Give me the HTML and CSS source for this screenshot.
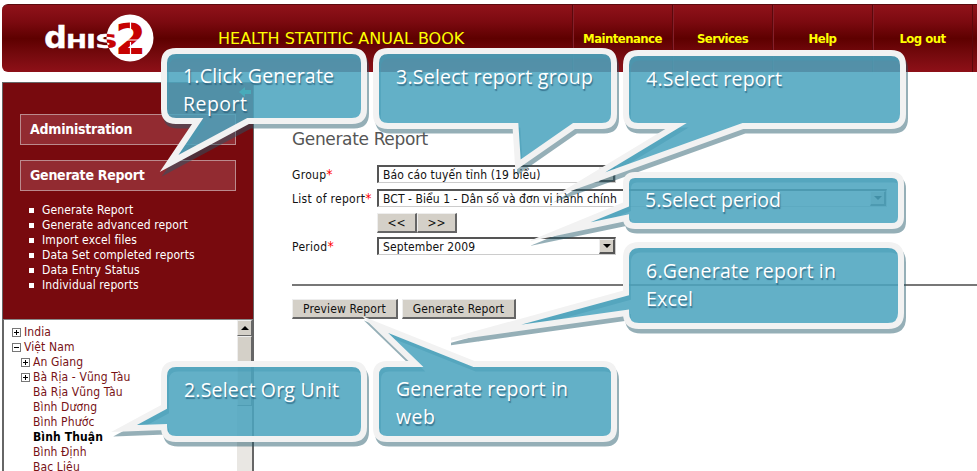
FILE: index.html
```html
<!DOCTYPE html>
<html lang="en">
<head>
<meta charset="utf-8">
<title>Generate Report</title>
<link rel="stylesheet" href="styles.css">
</head>
<body>
<header class="header">
  <svg class="logo" width="114" height="56" viewBox="0 0 114 56" role="img" aria-label="DHIS 2">
    <defs><clipPath id="disc"><circle cx="87" cy="28" r="23.5"/></clipPath></defs>
    <circle cx="87" cy="28" r="23.5" fill="#fff"/>
    <g class="logo-word" fill="#fff" stroke="#fff">
      <text x="1" y="38" font-size="30" textLength="23" lengthAdjust="spacingAndGlyphs">d</text>
      <text x="23" y="38" font-size="20" textLength="21" lengthAdjust="spacingAndGlyphs">H</text>
      <text x="43" y="38" font-size="20" textLength="10" lengthAdjust="spacingAndGlyphs">I</text>
      <text x="52" y="38" font-size="20" textLength="23" lengthAdjust="spacingAndGlyphs">S</text>
    </g>
    <g clip-path="url(#disc)" class="logo-word" fill="#c70202" stroke="#c70202">
      <text x="52" y="38" font-size="20" textLength="23" lengthAdjust="spacingAndGlyphs">S</text>
    </g>
    <text class="logo-two" x="72" y="44" font-size="43" textLength="31" lengthAdjust="spacingAndGlyphs">2</text>
    <path d="M74 30h28M87.500 12v10M87.500 32v14" stroke="#fff" stroke-width="1.200"/>
  </svg>
  <h1 class="title">HEALTH STATITIC ANUAL BOOK</h1>
  <nav class="nav"><a>Maintenance</a><a>Services</a><a>Help</a><a>Log out</a></nav>
</header>
<div class="page">
  <aside class="sidebar">
    <section class="menu">
      <svg class="collapse" width="16" height="14" viewBox="0 0 16 14"><path d="M2 7l6-5v3h6v4H8v3z" fill="#2fd59c"/></svg>
      <h2 class="menu-head">Administration</h2>
      <h2 class="menu-head">Generate Report</h2>
      <ul class="menu-list">
        <li>Generate Report</li><li>Generate advanced report</li><li>Import excel files</li><li>Data Set completed reports</li><li>Data Entry Status</li><li>Individual reports</li>
      </ul>
    </section>
    <section class="tree">
      <ul class="nodes">
        <li><i class="box plus"></i>India</li>
        <li><i class="box"></i>Việt Nam</li>
        <li class="sub"><i class="box plus"></i>An Giang</li>
        <li class="sub"><i class="box plus"></i>Bà Rịa - Vũng Tàu</li>
        <li class="leaf">Bà Rịa Vũng Tàu</li>
        <li class="leaf">Bình Dương</li>
        <li class="leaf">Bình Phước</li>
        <li class="leaf current">Bình Thuận</li>
        <li class="leaf">Bình Định</li>
        <li class="leaf">Bạc Liêu</li>
      </ul>
      <div class="scrollbar"><span class="up"></span><span class="thumb"></span></div>
    </section>
  </aside>
  <main class="main">
    <h2 class="heading">Generate Report</h2>
    <div class="form">
      <label>Group<b>*</b></label><div class="select"><span>Báo cáo tuyến tỉnh (19 biểu)</span><i></i></div>
      <label>List of report<b>*</b></label><div class="select wide"><span>BCT - Biểu 1 - Dân số và đơn vị hành chính</span><i></i></div>
      <span></span><div class="pager"><button>&lt;&lt;</button><button>&gt;&gt;</button></div>
      <label>Period<b>*</b></label><div class="select"><span>September 2009</span><i></i></div>
    </div>
    <div class="actions"><button>Preview Report</button><button>Generate Report</button></div>
  </main>
</div>
<svg class="callouts" width="977" height="471" viewBox="0 0 977 471">
  <defs>
    <path id="c1" d="M176 51H352Q364 51 364 63V109Q364 121 352 121H248L169 163.500 197.700 121H176Q164 121 164 109V63Q164 51 176 51Z"/>
    <path id="c2" d="M176 364H352Q364 364 364 376V427Q364 439 352 439H176Q164 439 164 427L124 428.500 164 407V376Q164 364 176 364Z"/>
    <path id="c3" d="M388 51H602Q614 51 614 63V114Q614 126 602 126H574L518 165 515.500 126H388Q376 126 376 114V63Q376 51 388 51Z"/>
    <path id="c4" d="M638 53H891Q903 53 903 65V114Q903 126 891 126H743L578.500 185 676 126H638Q626 126 626 114V65Q626 53 638 53Z"/>
    <path id="c5" d="M635 175H892Q901 175 901 184V217Q901 226 892 226H635Q626 226 626 218L559 232 626 204.500V184Q626 175 635 175Z"/>
    <path id="c6" d="M639 245H888Q901 245 901 258V313Q901 326 888 326H639Q626 326 626 313L476 334 626 293V258Q626 245 639 245Z"/>
    <path id="c7" d="M387 364H416L375 324.500 474 364H603Q614 364 614 375V428Q614 439 603 439H387Q376 439 376 428V375Q376 364 387 364Z"/>
    <clipPath id="k5"><rect x="531" y="160" width="400" height="90"/></clipPath>
    <clipPath id="k6"><rect x="451" y="230" width="480" height="120"/></clipPath>
  </defs>
  <g class="c"><use href="#c1" class="shade"/><use href="#c1" class="body"/></g>
  <g class="c"><use href="#c2" class="shade"/><use href="#c2" class="body"/></g>
  <g class="c"><use href="#c3" class="shade"/><use href="#c3" class="body"/></g>
  <g class="c"><use href="#c4" class="shade"/><use href="#c4" class="body"/></g>
  <g class="c" clip-path="url(#k5)"><use href="#c5" class="shade"/><use href="#c5" class="body"/></g>
  <g class="c" clip-path="url(#k6)"><use href="#c6" class="shade"/><use href="#c6" class="body"/></g>
  <g class="c"><use href="#c7" class="shade"/><use href="#c7" class="body"/></g>
  <g class="note">
    <text x="183" y="83" textLength="151">1.Click Generate</text><text x="183" y="111" textLength="64">Report</text>
    <text x="184" y="397" textLength="155">2.Select Org Unit</text>
    <text x="396" y="84" textLength="197">3.Select report group</text>
    <text x="646" y="86" textLength="136">4.Select report</text>
    <text x="645" y="207" textLength="136">5.Select period</text>
    <text x="646" y="278" textLength="190">6.Generate report in</text><text x="646" y="306" textLength="47">Excel</text>
    <text x="396" y="396" textLength="172">Generate report in</text><text x="396" y="424" textLength="39">web</text>
  </g>
</svg>
</body>
</html>
```
FILE: styles.css
```css
* { box-sizing: border-box; }
body { margin: 0; width: 977px; height: 471px; overflow: hidden; background: #fff; color: #111; font: 12px/15px "DejaVu Sans Condensed", "DejaVu Sans", sans-serif; font-stretch: condensed; letter-spacing: .12px; position: relative; }
h1, h2, ul { margin: 0; padding: 0; font-weight: normal; list-style: none; }
.header { margin: 4px 0 0 2px; height: 68px; border-radius: 6px 0 0 6px; background: linear-gradient(#90121a, #7c0a10 25%, #5e0000 50%, #760a0e 75%, #8e1018); border-top: 1px solid #5c0a0e; display: flex; }
.logo { margin: 5px 0 0 41px; }
.logo-word { font-family: "DejaVu Sans"; font-stretch: normal; font-weight: bold; stroke-width: .3; letter-spacing: 0; }
.logo-two { font-family: "DejaVu Sans"; font-stretch: normal; font-weight: bold; fill: #c70202; letter-spacing: 0; }
.title { margin-left: 61px; width: 354px; color: #ff0; font-family: "DejaVu Sans", sans-serif; font-stretch: normal; font-size: 16px; line-height: 67px; letter-spacing: 0; white-space: nowrap; }
.nav { display: flex; color: #ff0; font-weight: bold; font-size: 13px; line-height: 67px; letter-spacing: -.55px; }
.nav a { width: 100px; text-align: center; border-left: 1px solid #5c080c; box-shadow: inset 1px 0 #86202a; }
.nav a:last-child { box-shadow: inset 1px 0 #86202a, 1px 0 #5c080c; }
.page { display: flex; margin-top: 10px; }
.sidebar { width: 252px; margin-left: 2px; }
.menu { position: relative; height: 237px; background: #780a0e; border: 1px solid #666; border-bottom: 0; padding: 31px 17px 0; color: #fff; }
.collapse { position: absolute; right: 0; top: 2px; }
.menu-head { height: 31px; margin-bottom: 15px; padding-left: 9px; background: #922b31; border: 1px solid #bb8a8d; font-size: 14px; line-height: 29px; font-weight: bold; letter-spacing: -.25px; }
.menu-list { padding-left: 9px; margin-top: -3px; }
.menu-list li { display: flex; align-items: center; gap: 8px; height: 15px; white-space: nowrap; }
.menu-list li::before { content: ""; width: 5px; height: 5px; background: #fff; }
.tree { height: 160px; display: flex; justify-content: space-between; border: 2px solid #666; border-top: 1px solid #888; border-bottom: 0; }
.nodes { padding: 5px 0 0 8px; color: #781216; }
.nodes li { height: 15px; display: flex; align-items: center; gap: 3px; white-space: nowrap; }
.nodes .sub { padding-left: 9px; }
.nodes .leaf { padding-left: 21px; }
.nodes .current { color: #000; font-weight: bold; }
.box { width: 9px; height: 9px; border: 1px solid #777; background: linear-gradient(#000, #000) center/5px 1px no-repeat; }
.plus { background: linear-gradient(#000, #000) center/5px 1px no-repeat, linear-gradient(#000, #000) center/1px 5px no-repeat; }
.scrollbar { width: 15px; background: #e9e7e3; }
.up, .thumb { display: block; background: #d4d0c8; border: 1px solid #eee; border-right-color: #666; border-bottom-color: #666; }
.up { height: 16px; display: flex; align-items: center; justify-content: center; }
.up::before { content: ""; border: 4px solid transparent; border-top: 0; border-bottom-color: #000; }
.thumb { height: 70px; }
.main { margin-left: 38px; flex: 1; padding-top: 46px; }
.heading { color: #555; font-family: "DejaVu Sans", sans-serif; font-stretch: normal; font-size: 17px; line-height: 22px; letter-spacing: -.35px; }
.form { display: grid; grid-template-columns: 85px 1fr; grid-template-rows: 24px 24px 24px 24px; margin-top: 15px; height: 121px; border-bottom: 2px solid #777; white-space: nowrap; }
.form label { line-height: 20px; letter-spacing: .3px; }
.form b { color: red; font-weight: normal; font-size: 14px; line-height: 14px; }
.select { width: 239px; height: 18px; border: 2px solid #555; border-right: 1px solid #ccc; border-bottom: 1px solid #ccc; display: flex; justify-content: space-between; line-height: 16px; padding-left: 4px; background: #fff; }
.wide { width: 510px; letter-spacing: .07px; }
.select i { width: 16px; background: #d4d0c8; border: 1px solid #eee; border-right: 2px solid #555; border-bottom: 2px solid #555; display: flex; align-items: center; justify-content: center; }
.select i::before { content: ""; border: 4px solid transparent; border-bottom: 0; border-top-color: #000; }
button { font: inherit; letter-spacing: inherit; color: #111; background: #d4d0c8; border: 1px solid #eee; border-right: 2px solid #666; border-bottom: 2px solid #666; padding: 2px 0 0; height: 20px; white-space: nowrap; }
.pager button { width: 40px; letter-spacing: 0; }
.actions { display: flex; gap: 4px; margin-top: 13px; }
.pager { display: flex; }
.actions button:first-child { width: 106px; }
.actions button:last-child { width: 114px; }
.callouts { position: absolute; left: 0; top: 0; }
.body { fill: rgba(76, 164, 191, .87); stroke: #f2f2f2; stroke-width: 6px; stroke-linejoin: miter; stroke-miterlimit: 30; }
.shade { fill: none; stroke: rgba(33, 88, 104, .48); stroke-width: 6px; stroke-miterlimit: 30; transform: translate(2px, 4.500px); }
.note { fill: #fff; font: 19.5px/28px "Open Sans", sans-serif; font-stretch: normal; letter-spacing: 0; text-shadow: 1px 2px 1px rgba(30, 80, 110, .6); }
```
